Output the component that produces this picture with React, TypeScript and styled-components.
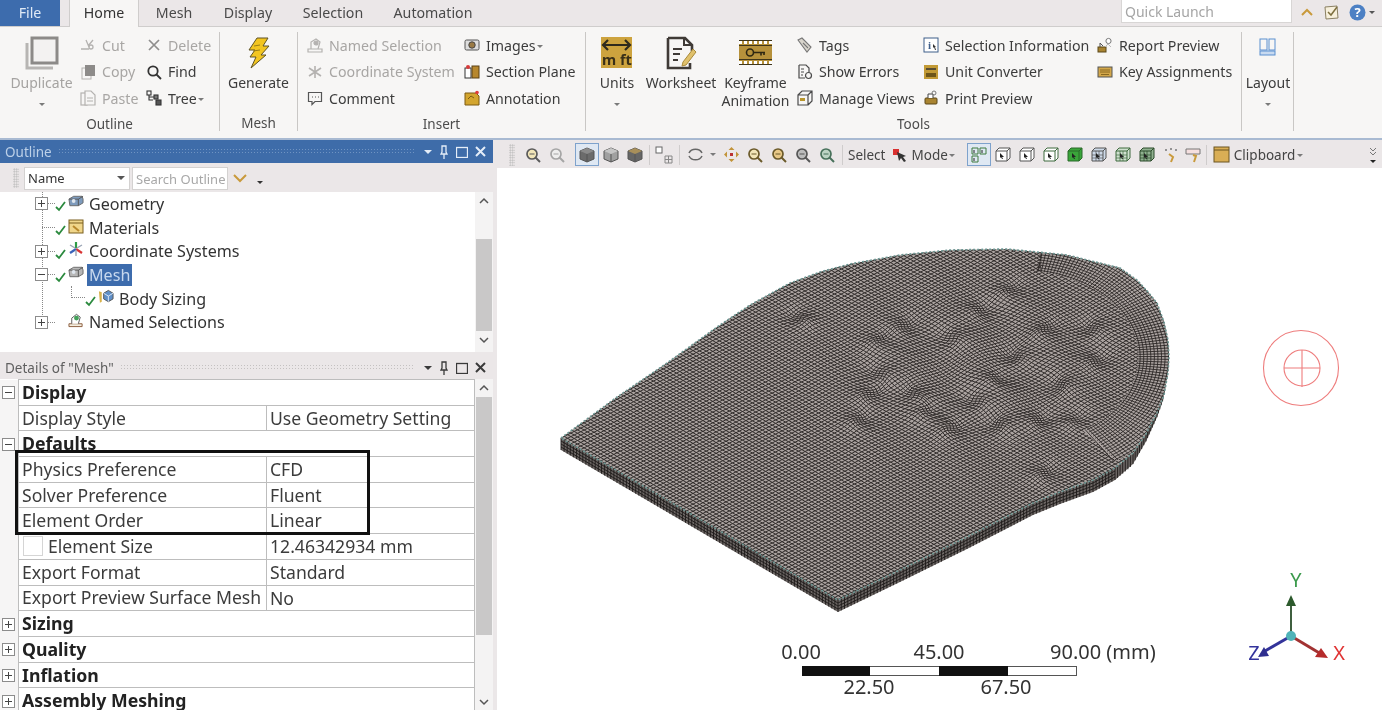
import React from "react";
import styled, { createGlobalStyle } from "styled-components";

const Global = createGlobalStyle`
  html, body { margin: 0; padding: 0; background: #fff; overflow: hidden; }
  body { font-family: "Noto Sans", "Liberation Sans", sans-serif; color: #3a3a3a; }
`;

/* ---------- icons ---------- */
const G = "#b4b2b0";
const icons: Record<string, React.ReactNode> = {
  cut: <g fill="none" stroke={G} strokeWidth="1.3"><path d="M1 12h8M6 3l3 7M13 3L8 9" /><circle cx="11" cy="10" r="2" /></g>,
  copy: <g><rect x="2" y="4" width="9" height="11" fill="none" stroke={G} /><rect x="5" y="1" width="10" height="11" fill="#8d8b89" /></g>,
  paste: <g fill="none" stroke={G} strokeWidth="1.2"><rect x="1" y="3" width="6" height="12" /><path d="M5 1h6l4 4v10H5z" fill="#f7f6f5" /><path d="M7 8h6M7 11h6" /></g>,
  del: <path d="M3 3l10 10M13 3L3 13" stroke="#8f8e8d" strokeWidth="1.7" fill="none" />,
  find: <g fill="none" stroke="#333" strokeWidth="1.8"><circle cx="7" cy="7" r="4.7" /><path d="M10.5 10.5L15 15" /></g>,
  tree: <g fill="none" stroke="#333" strokeWidth="1.1"><rect x="1" y="1" width="4" height="4" /><path d="M3 5v5h4M3 7h5" /><rect x="8" y="5" width="4" height="4" fill="#777" /><rect x="10" y="10" width="5" height="5" fill="#555" /></g>,
  named: <g fill="none" stroke={G} strokeWidth="1.2"><path d="M1 12h14v3H1z" /><path d="M4 12V5l5-3 4 3-2 7" /><circle cx="9" cy="6" r="2" fill={G} /></g>,
  coord: <g stroke={G} strokeWidth="1.6"><path d="M8 2v12M2 4l12 8M14 4L2 12" /></g>,
  comment: <path d="M1.5 2.5h13v9H8l-3 3v-3H1.5z M5 7h1M8 7h1M11 7h1" fill="none" stroke="#555" strokeWidth="1.2" />,
  images: <g><rect x="1" y="3" width="14" height="10" rx="1.5" fill="#ddd" stroke="#555" /><circle cx="8" cy="8" r="3.2" fill="#9a7a44" stroke="#444" /></g>,
  section: <g><rect x="1" y="4" width="6" height="10" fill="#fff" stroke="#333" /><rect x="8" y="2" width="7" height="12" fill="#b7872d" stroke="#5a4015" /><circle cx="4" cy="3" r="2" fill="#d83a3a" /></g>,
  annot: <g><path d="M1 3h11l3 3v9H1z" fill="#d3a52e" stroke="#7c5b12" /><path d="M4 9l3-3 3 2" stroke="#7c5b12" fill="none" /><circle cx="13" cy="2.5" r="1.8" fill="#e03b3b" /></g>,
  tags: <g fill="#d9d5cc" stroke="#777" strokeWidth="1.1"><path d="M1 3l4-2 9 9-4 5z" /><path d="M6 6l5 5" /></g>,
  errors: <g fill="none" stroke="#4a4a4a" strokeWidth="1.2"><path d="M2 1h7l3 3v4M2 1v13h6" /><path d="M4 5h3M4 8h3M4 11h2" /><circle cx="11.5" cy="11.5" r="3" /></g>,
  views: <g fill="none" stroke="#4a4a4a" strokeWidth="1.2"><path d="M1 5h10v10H1zM1 5l4-4h10v10l-4 4M11 5l4-4" /><rect x="3" y="8" width="5" height="3" fill="#b9962c" stroke="none" /></g>,
  selinfo: <g><rect x="1" y="1" width="14" height="14" fill="#fff" stroke="#3f5f8a" /><text x="5" y="12" fontSize="11" fontWeight="700" fill="#3f5f8a" fontFamily="Liberation Serif, serif">i</text><path d="M10 7l3 3-1 0 1 3-1 0-1-3-1 1z" fill="#333" /></g>,
  conv: <g><rect x="1" y="1" width="14" height="14" fill="#c29a35" /><path d="M3 5h10" stroke="#333" strokeWidth="1.5" /><rect x="3" y="9" width="10" height="4" fill="#6d5519" /></g>,
  print: <g><rect x="2" y="8" width="12" height="6" rx="1" fill="#a98431" stroke="#5b4718" /><path d="M5 8V4h5v4" fill="#fff" stroke="#444" /><circle cx="11" cy="3" r="2" fill="none" stroke="#777" /></g>,
  report: <g><rect x="1" y="10" width="8" height="5" fill="#a98431" stroke="#5b4718" /><path d="M3 10V6l3 3" stroke="#555" fill="none" /><circle cx="11.5" cy="4" r="2.6" fill="#fff" stroke="#777" /><path d="M8 10l3-3 3 3" stroke="#bbb" fill="none" /></g>,
  keys: <g><rect x="1" y="3" width="14" height="10" fill="#d3a74a" stroke="#555" /><path d="M3 6h10M3 8h10M4 10.500h8" stroke="#8a6920" /></g>,
};

const Ico = ({ k, s = 16 }: { k: string; s?: number }) => (
  <svg width={s} height={s} viewBox="0 0 16 16">{icons[k]}</svg>
);

const DuplicateIcon = () => (
  <svg width="36" height="36" viewBox="0 0 36 36">
    <path d="M3 8v25h26" fill="none" stroke="#b7b5b3" strokeWidth="3" />
    <rect x="8" y="3" width="25" height="25" fill="#f3f2f1" stroke="#8c8a88" strokeWidth="3" />
  </svg>
);
const BoltIcon = () => (
  <svg width="22" height="32" viewBox="0 0 22 32">
    <path d="M9 1h11l-5 8h6L13 18h5L3 31l5-11H2l5-7H1z" fill="#f2c521" stroke="#5e5326" strokeWidth="1" />
    <path d="M6 9l6-1M5 14l7-1" stroke="#9a7e15" />
  </svg>
);
const UnitsIcon = () => (
  <svg width="32" height="32" viewBox="0 0 32 32">
    <rect width="31" height="31" fill="#cda33e" />
    <path d="M2 8h27M7 3L2 8l5 5M24 3l5 5-5 5" fill="none" stroke="#2f2a1c" strokeWidth="2.2" />
    <text x="1" y="28" fontSize="14.500" fontWeight="700" fill="#3a3018" fontFamily="Noto Sans, sans-serif">m ft</text>
  </svg>
);
const WorksheetIcon = () => (
  <svg width="32" height="34" viewBox="0 0 32 34">
    <path d="M3 2h17l7 7v6M3 2v30h22v-5" fill="none" stroke="#3f3a36" strokeWidth="2.6" />
    <path d="M19 2v7h8M8 13h9M8 18h7M8 24h5" fill="none" stroke="#3f3a36" strokeWidth="2" />
    <path d="M28 13l3 3-10 13-4 1 1-4z" fill="#e0c16c" stroke="#a98a39" />
  </svg>
);
const KeyframeIcon = () => (
  <svg width="34" height="26" viewBox="0 0 34 26">
    <rect width="33" height="25" fill="#b6913b" />
    <path d="M0 2.500h33M0 22.500h33" stroke="#fff" strokeWidth="3" strokeDasharray="3 2" />
    <rect y="0" width="33" height="1" fill="#3f351a" /><rect y="5" width="33" height="1" fill="#3f351a" />
    <rect y="19" width="33" height="1" fill="#3f351a" /><rect y="24" width="33" height="1" fill="#3f351a" />
    <circle cx="11" cy="12.500" r="3.500" fill="none" stroke="#2e2712" strokeWidth="1.600" />
    <path d="M15 12.500h11M22 12.500v3M25 12.500v2.500" stroke="#2e2712" strokeWidth="1.600" fill="none" />
  </svg>
);
const LayoutIcon = () => (
  <svg width="18" height="18" viewBox="0 0 18 18">
    <rect x="1" y="1" width="7" height="11" fill="none" stroke="#5b8fd0" />
    <rect x="10" y="1" width="6" height="11" fill="none" stroke="#5b8fd0" />
    <rect x="1" y="13" width="15" height="4" fill="#c8daf0" stroke="#5b8fd0" />
  </svg>
);
const Caret = styled.span<{ $c?: string; $s?: number; $ml?: number; $mt?: number }>`
  display: inline-block; width: 0; height: 0; vertical-align: middle;
  margin-left: ${(p) => p.$ml || 0}px; margin-top: ${(p) => p.$mt || 0}px;
  border-left: ${(p) => p.$s || 3}px solid transparent; border-right: ${(p) => p.$s || 3}px solid transparent;
  border-top: ${(p) => p.$s || 3}px solid ${(p) => p.$c || "#7a7a7a"};
`;

/* ---------- top ---------- */
const Page = styled.div`
  width: 1382px; height: 710px; overflow: hidden; display: flex; flex-direction: column;
  background: #ebe7e8; filter: blur(0.35px);
`;
const TabBar = styled.div`
  height: 26px; flex: none; display: flex; align-items: flex-start; background: #ebe7e8;
  border-bottom: 1px solid #cfcdcc; font-size: 14.200px; color: #3f3f3f;
`;
const FileTab = styled.div`
  width: 60px; height: 26px; background: #3d6cad; color: #dfe9f5; text-align: center; line-height: 25px; margin-right: 9px;
`;
const HomeTab = styled.div`
  width: 68px; height: 27px; background: #f7f6f5; border: 1px solid #cfcdcc; border-width: 0 1px; text-align: center; line-height: 25px; color: #333; margin-right: 6px;
`;
const Tab = styled.div<{ $w: number }>`
  width: ${(p) => p.$w}px; text-align: center; line-height: 25px; color: #4a4a4a;
`;
const Spacer = styled.div`flex: 1;`;
const QuickLaunch = styled.div`
  width: 171px; height: 23px; background: #fff; border: 1px solid #d8d6d5; border-top: 0; box-sizing: border-box;
  color: #a5a5a5; padding-left: 3px; line-height: 23px; font-size: 14px; margin-right: 4px;
`;
const TopIcons = styled.div`
  width: 86px; height: 24px; display: flex; align-items: center; gap: 9px; padding-left: 4px; box-sizing: border-box;
`;

const Ribbon = styled.div`
  height: 113px; flex: none; box-sizing: border-box; padding: 5px 0 7px; display: flex; background: #f7f6f5;
  border-bottom: 2px solid #a9bad2;
`;
const Group = styled.div<{ $w: number }>`
  width: ${(p) => p.$w}px; flex: none; box-sizing: border-box; display: flex; flex-direction: column;
  border-right: 1px solid #c9c7c5;
`;
const GroupBody = styled.div<{ $pad?: number }>`
  height: 80px; display: flex; padding-left: ${(p) => p.$pad || 0}px;
`;
const GroupLabel = styled.div`
  margin-top: 4px; line-height: 16px; text-align: center; font-size: 13.5px; color: #4c4c4c;
`;
const Big = styled.div<{ $w: number; $off?: boolean }>`
  width: ${(p) => p.$w}px; flex: none; display: flex; flex-direction: column; align-items: center;
  font-size: 14px; line-height: 18px; text-align: center; color: ${(p) => (p.$off ? "#a5a3a1" : "#3c3c3c")};
`;
const BigIcon = styled.div<{ $top?: boolean }>`
  height: 42px; display: flex; justify-content: center;
  align-items: ${(p) => (p.$top ? "flex-start" : "center")};
  padding-top: ${(p) => (p.$top ? "6px" : "0")}; box-sizing: border-box;
`;
const BigCaret = styled.div`
  height: 20px; line-height: 22px;
`;
const Col = styled.div<{ $w: number }>`
  width: ${(p) => p.$w}px; flex: none; display: flex; flex-direction: column;
`;
const Small = styled.div<{ $off?: boolean }>`
  height: 26.5px; display: flex; align-items: center; gap: 6px; font-size: 14.200px; white-space: nowrap;
  color: ${(p) => (p.$off ? "#a8a6a4" : "#3c3c3c")};
`;

/* ---------- main ---------- */
const Main = styled.div`flex: 1; display: flex; min-height: 0;`;
const Left = styled.div`width: 497px; flex: none; display: flex; flex-direction: column; background: #ebe7e8;`;
const PanelHeader = styled.div<{ $active?: boolean }>`
  width: 493px; height: 23px; flex: none; box-sizing: border-box; display: flex; align-items: center; padding: 0 7px 0 5px;
  font-size: 13.5px; color: ${(p) => (p.$active ? "#bcd0e8" : "#5f5f5f")};
  background: ${(p) => (p.$active ? "#3e6ca9" : "#ebe7e8")};
`;
const Dots = styled.div<{ $active?: boolean }>`
  flex: 1; height: 7px; margin: 0 10px 0 6px;
  background-image: radial-gradient(${(p) => (p.$active ? "#6f93c2" : "#c4c1c1")} 0.8px, transparent 0.9px);
  background-size: 3px 3px;
`;
const HeaderIcons = styled.div`width: 62px; flex: none; display: flex; justify-content: space-between; align-items: center;`;
const OutlineBar = styled.div`
  height: 29px; flex: none; display: flex; align-items: center; font-size: 13px; padding-top: 1px; box-sizing: border-box;
`;
const Grip = styled.div<{ $ml: number; $h?: number }>`
  width: 6px; height: ${(p) => p.$h || 20}px; flex: none; margin-left: ${(p) => p.$ml}px;
  background-image: radial-gradient(#bbb 0.8px, transparent 0.9px); background-size: 2.500px 2.500px;
`;
const NameSelect = styled.div`
  width: 106px; height: 23px; box-sizing: border-box; margin-left: 5px; background: #fff; border: 1px solid #d4d2d1;
  display: flex; align-items: center; justify-content: space-between; padding: 0 4px 0 3px; color: #333;
`;
const SearchBox = styled.div`
  width: 96px; height: 23px; box-sizing: border-box; margin-left: 2px; background: #fff; border: 1px solid #d4d2d1;
  color: #a8a8a8; padding-left: 3px; line-height: 22px; white-space: nowrap; overflow: hidden;
`;
const BarChevron = styled.svg`width: 16px; height: 10px; margin-left: 4px; flex: none;`;
const TreeWrap = styled.div`
  width: 493px; height: 160px; flex: none; display: flex; background: #fff;
`;
const TreeList = styled.div`
  flex: 1; font-size: 16.100px; color: #333; white-space: nowrap;
  background-image: repeating-linear-gradient(to bottom, #888 0 1px, transparent 1px 2px);
  background-size: 1px 130px; background-position: 42px 0; background-repeat: no-repeat;
`;
const TreeRow = styled.div`
  height: 23.700px; display: flex; align-items: center;
`;
const Expander = styled.div<{ $ml?: number }>`
  width: 13px; height: 13px; box-sizing: border-box; margin-left: ${(p) => p.$ml ?? 0}px; flex: none;
  border: 1px solid #8c8c8c; background: #fff; position: relative;
  &::before { content: ""; position: absolute; left: 2px; right: 2px; top: 5px; height: 1px; background: #444; }
`;
const PlusExpander = styled(Expander)`
  &::after { content: ""; position: absolute; top: 2px; bottom: 2px; left: 5px; width: 1px; background: #444; }
`;
const Connector = styled.div<{ $w: number; $ml?: number }>`
  width: ${(p) => p.$w}px; height: 0; flex: none; margin-left: ${(p) => p.$ml || 0}px; border-top: 1px dotted #888;
`;
const Elbow = styled.div`
  width: 14px; height: 12px; flex: none; margin: -13px 0 0 71px; box-sizing: border-box;
  border-left: 1px dotted #888; border-bottom: 1px dotted #888;
`;
const TreeCheck = styled.svg`width: 12px; height: 11px; flex: none; margin-top: 6px;`;
const NodeIcon = styled.div<{ $ml?: number }>`
  width: 16px; height: 16px; flex: none; display: flex; margin: -4px 0 0 ${(p) => p.$ml ?? 1}px;
`;
const NodeLabel = styled.span<{ $sel?: boolean }>`
  margin-left: ${(p) => (p.$sel ? "3px" : "5px")}; line-height: 22px;
  padding: 0 ${(p) => (p.$sel ? "2px" : "0")};
  background: ${(p) => (p.$sel ? "#3d6cad" : "transparent")};
  color: ${(p) => (p.$sel ? "#c7d8ee" : "#333")};
`;
const Scrollbar = styled.div`
  width: 18px; flex: none; display: flex; flex-direction: column; align-items: center; background: #f4f3f3;
`;
const ScrollArrow = styled.svg<{ $mt: number }>`
  width: 12px; height: 8px; flex: none; margin-top: ${(p) => p.$mt}px;
`;
const Thumb = styled.div<{ $mt: number; $h: number }>`
  width: 16px; flex: none; margin-top: ${(p) => p.$mt}px; height: ${(p) => p.$h}px; background: #c9c8c8;
`;
const Splitter = styled.div`height: 4px; flex: none;`;
const DetailsWrap = styled.div`
  width: 493px; flex: 1; min-height: 0; display: flex; position: relative; overflow: hidden; background: #fff;
`;
const Table = styled.div`flex: 1; font-size: 17.600px; color: #3c3c3c; white-space: nowrap;`;
const Row = styled.div`
  height: 25.700px; box-sizing: border-box; display: flex; align-items: stretch;
`;
const Gutter = styled.div`
  width: 18px; flex: none; display: flex; align-items: center; padding-left: 2px; box-sizing: border-box; background: #f6f5f5;
`;
const RowBody = styled.div`
  flex: 1; display: flex; border-bottom: 1px solid #bdbdbd; border-left: 1px solid #bdbdbd; border-right: 1px solid #bdbdbd;
  line-height: 25px;
`;
const TopRule = styled.div`height: 1px; margin-left: 18px; background: #bdbdbd;`;
const Section = styled.div`padding-left: 3px; font-weight: 700; font-size: 17.700px; color: #222;`;
const NameCell = styled.div`
  width: 248px; flex: none; box-sizing: border-box; padding-left: 3px; border-right: 1px solid #bdbdbd; display: flex; align-items: center;
`;
const ValueCell = styled.div`padding-left: 3px;`;
const CheckBox = styled.div`
  width: 20px; height: 20px; box-sizing: border-box; margin: 0 5px 0 1px; border: 1px solid #d5d5d5; background: #fff;
`;
const Highlight = styled.div`
  position: absolute; left: 15px; top: 71px; width: 355px; height: 85px; box-sizing: border-box; border: 3px solid #111;
`;

/* ---------- viewport ---------- */
const Viewport = styled.div`flex: 1; display: flex; flex-direction: column; min-width: 0;`;
const ViewBar = styled.div`
  height: 28px; flex: none; display: flex; align-items: center; background: #ebe7e8; font-size: 13.500px; color: #444; padding: 1px 0 0 12px; box-sizing: border-box; white-space: nowrap;
`;
const ToolBtn = styled.div<{ $on?: boolean; $w?: number; $ml?: number }>`
  width: ${(p) => p.$w || 24}px; height: 23px; flex: none; box-sizing: border-box; display: flex; align-items: center; justify-content: center;
  margin-left: ${(p) => p.$ml || 0}px;
  border: 1px solid ${(p) => (p.$on ? "#7ea2cc" : "transparent")};
  background: ${(p) => (p.$on ? "#dfe8f3" : "transparent")};
`;
const Sep = styled.div<{ $l?: number; $r?: number }>`
  width: 1px; height: 20px; flex: none; background: #cfcccc; margin: 0 ${(p) => p.$r ?? 3}px 0 ${(p) => p.$l ?? 3}px;
`;
const BarGap = styled.div`width: 6px; flex: none;`;
const BarText = styled.span<{ $ml?: number }>`margin-left: ${(p) => p.$ml || 0}px;`;
const ModeIcon = styled.svg`width: 16px; height: 16px; margin-left: 7px; flex: none;`;
const Canvas = styled.div`flex: 1; position: relative; background: #fff; overflow: hidden;`;
const CanvasArt = styled.svg`position: absolute; left: 0; top: 0; width: 885px; height: 542px;`;
const Overflow = styled.div`
  margin-left: auto; margin-right: 5px; width: 9px; display: flex; flex-direction: column; align-items: center; gap: 4px;
`;

/* ---------- toolbar icons ---------- */
const Lens = ({ c = "#5a5a5a", fill = "#f2e6b8" }: { c?: string; fill?: string }) => (
  <svg width="16" height="16" viewBox="0 0 16 16">
    <circle cx="7" cy="7" r="5" fill={fill} stroke={c} strokeWidth="1.700" />
    <path d="M10.500 10.500L15 15" stroke={c} strokeWidth="2" />
    <path d="M4.500 7h5" stroke={c} />
  </svg>
);
const Cube = ({ top, side }: { top: string; side: string }) => (
  <svg width="16" height="16" viewBox="0 0 16 16">
    <path d="M8 1l7 3v8l-7 3-7-3V4z" fill={side} stroke="#555" />
    <path d="M8 1l7 3-7 3-7-3z" fill={top} />
    <path d="M8 7v8" stroke="#555" />
  </svg>
);
const Sel = ({ f = "#fff", c = "#555", grid }: { f?: string; c?: string; grid?: boolean }) => (
  <svg width="16" height="16" viewBox="0 0 16 16">
    <path d="M1 4l3-3h11v10l-3 3H1z" fill={f} stroke={c} />
    <path d="M1 4h11v10M12 4l3-3" fill="none" stroke={c} />
    {grid && <path d="M5 4v10M8 4v10M1 8h11M1 11h11" stroke={c} strokeWidth=".7" />}
    <path d="M5 6l4 4-2 0 1 2-1 0-1-2-1 1z" fill="#222" />
  </svg>
);

/* ---------- mesh drawing ---------- */
type P = [number, number];
const top: P[] = [
  [561, 438], [617, 397], [667, 363], [717, 327], [750, 305], [790, 283], [820, 272], [850, 264], [900, 255], [950, 250],
  [1007, 249], [1067, 255], [1120, 268], [1137, 280], [1148, 292], [1157, 303], [1164, 322], [1168, 340], [1169, 357], [1168, 373],
  [1164, 395], [1157, 413], [1146, 434], [1133, 453], [1115, 468], [1093, 480], [1060, 492], [1033, 503], [967, 537], [900, 570], [838, 600],
];
const toD = (pts: P[], close = true) =>
  "M" + pts.map((p) => p[0].toFixed(1) + " " + p[1].toFixed(1)).join("L") + (close ? "Z" : "");
const knots: [number, number, number][] = [
  [981, 309, 1], [1094, 328, -1], [1045, 330, 1], [1095, 360, 1], [878, 373, -1], [870, 393, 1], [915, 395, -1], [925, 412, 1],
  [950, 338, -1], [995, 380, 1], [1000, 425, -1], [1045, 473, 1], [1060, 385, -1], [950, 428, 1], [1020, 355, -1], [880, 340, 1], [1040, 420, 1],
  [800, 318, -1], [1010, 290, 1], [905, 325, 1], [975, 400, -1], [1075, 420, 1], [860, 420, 1],
];
const warp = (x: number, y: number): P => {
  let nx = x, ny = y;
  const ex = x - 985, ey = y - 365;
  const env = Math.exp(-(ex * ex) / 19000 - (ey * ey) / 7000);
  nx += 3.2 * Math.sin(y / 11 + x / 29) * env;
  ny += 2.4 * Math.cos(x / 13 - y / 23) * env;
  for (const [cx, cy, s] of knots) {
    const dx = x - cx, dy = (y - cy) * 1.5;
    const e = Math.exp(-(dx * dx + dy * dy) / 190);
    nx += (-dy * s * 0.5 - dx * 0.45) * e;
    ny += (dx * s * 0.3 - dy * 0.3) * e;
  }
  return [nx, ny];
};
const buildGrid = () => {
  const a: P = [3.3, 1.92], b: P = [3.3, -1.65], o: P = [561, 438];
  let d = "";
  const pt = (u: number, v: number) => warp(o[0] + u * a[0] + v * b[0], o[1] + u * a[1] + v * b[1]);
  for (let u = -20; u <= 95; u++) {
    const l: P[] = [];
    for (let v = -5; v <= 135; v += 1) l.push(pt(u, v));
    d += toD(l, false);
  }
  for (let v = -5; v <= 135; v++) {
    const l: P[] = [];
    for (let u = -20; u <= 95; u += 1) l.push(pt(u, v));
    d += toD(l, false);
  }
  return d;
};
const rim = { cx: 1020, cy: 357, rx: 148, ry: 108, r0: 0.8, r1: 1.16, a0: -82, a1: 58 };
const ell = (r: number, deg: number): P => {
  const t = (deg * Math.PI) / 180;
  return [rim.cx + r * rim.rx * Math.cos(t), rim.cy + r * rim.ry * Math.sin(t)];
};
const buildRim = () => {
  let d = "";
  for (let r = rim.r0 + 0.012; r <= rim.r1; r += 0.024) {
    const l: P[] = [];
    for (let t = rim.a0; t <= rim.a1; t += 3) l.push(ell(r, t));
    d += toD(l, false);
  }
  for (let t = rim.a0 + 0.75; t <= rim.a1; t += 1.5) d += toD([ell(rim.r0, t), ell(rim.r1, t)], false);
  return d;
};
const rimFill = () => {
  const l: P[] = [];
  for (let t = rim.a0; t <= rim.a1; t += 3) l.push(ell(rim.r1, t));
  for (let t = rim.a1; t >= rim.a0; t -= 3) l.push(ell(rim.r0, t));
  return toD(l);
};
const lowerEdge: P[] = [[561, 438], [838, 600], ...top.slice(20).reverse().slice(1)];
const depthAt = (x: number) => (x > 1130 ? Math.max(1, 12 - (x - 1130) / 3.5) : 12);
const buildSide = () => {
  let d = "";
  for (let i = 0; i < lowerEdge.length - 1; i++) {
    const [x0, y0] = lowerEdge[i], [x1, y1] = lowerEdge[i + 1];
    const n = Math.max(1, Math.round(Math.hypot(x1 - x0, y1 - y0) / 3.6));
    for (let k = 0; k < n; k++) {
      const x = x0 + ((x1 - x0) * k) / n, y = y0 + ((y1 - y0) * k) / n;
      d += `M${x.toFixed(1)} ${y.toFixed(1)}v${depthAt(x).toFixed(1)}`;
    }
  }
  for (const off of [3, 6, 9]) d += toD(lowerEdge.filter((p) => p[0] < 1130).map((p) => [p[0], p[1] + off] as P), false);
  return d;
};
const sideOutline = (): P[] => {
  const out = lowerEdge.map((p) => [p[0], p[1] + depthAt(p[0])] as P);
  return [...lowerEdge, ...out.reverse()];
};
const GRID = buildGrid(), RIM = buildRim(), RIMF = rimFill(), SIDE = buildSide(), SIDEF = toD(sideOutline()), TOP = toD(top);

const ART_FONT = "Noto Sans, Liberation Sans, sans-serif";

const Art = () => (
  <CanvasArt viewBox="497 168 885 542">
    <defs><clipPath id="surf"><path d={TOP} /></clipPath></defs>
    <path d={SIDEF} fill="#6b6563" />
    <path d={SIDE} fill="none" stroke="#1d1a19" strokeWidth=".9" />
    <path d={TOP} fill="#aba3a0" />
    <g clipPath="url(#surf)">
      <path d={GRID} fill="none" stroke="#2b2726" strokeWidth=".95" />
      <path d={RIMF} fill="#aba3a0" />
      <path d={RIM} fill="none" stroke="#2b2726" strokeWidth=".9" />
    </g>
    <path d={TOP} fill="none" stroke="#6d9793" strokeWidth="1.600" strokeDasharray="2 2" />

    <circle cx="1301" cy="368" r="37.500" fill="none" stroke="#ee7d7d" strokeWidth="1.100" />
    <circle cx="1302" cy="368" r="18" fill="none" stroke="#ee7d7d" strokeWidth="1.100" />
    <path d="M1284 368h36M1302 350v37" stroke="#ee7d7d" strokeWidth="1.100" />

    <g fontFamily={ART_FONT} fontSize="20" fill="#333">
      <text x="801" y="659" textAnchor="middle">0.00</text>
      <text x="939" y="659" textAnchor="middle">45.00</text>
      <text x="1050" y="659">90.00 (mm)</text>
      <text x="869" y="694" textAnchor="middle">22.50</text>
      <text x="1006" y="694" textAnchor="middle">67.50</text>
    </g>
    <rect x="802.500" y="666.500" width="274" height="9" fill="#fff" stroke="#555" />
    <rect x="802" y="666" width="68" height="10" fill="#111" />
    <rect x="939" y="666" width="69" height="10" fill="#111" />

    <path d="M1291 636V604" stroke="#3f5f3f" strokeWidth="2" />
    <path d="M1291 595l5 11h-10z" fill="#2d5a2d" />
    <path d="M1291 636l30 18" stroke="#a23232" strokeWidth="3" />
    <path d="M1328 658l-13-1 6-9z" fill="#b52b2b" />
    <path d="M1291 636l-26 15" stroke="#33339a" strokeWidth="3" />
    <path d="M1258 657l6-10 5 9z" fill="#2f2f8f" />
    <circle cx="1291" cy="636" r="5" fill="#4fb3b8" />
    <g fontFamily={ART_FONT} fontSize="20">
      <text x="1296" y="587" textAnchor="middle" fill="#3b9a4c">Y</text>
      <text x="1339" y="660" textAnchor="middle" fill="#e03434">X</text>
      <text x="1254" y="660" textAnchor="middle" fill="#34349c">Z</text>
    </g>
  </CanvasArt>
);

/* ---------- small parts ---------- */
const Small2 = ({ k, t, off }: { k: string; t: React.ReactNode; off?: boolean }) => (
  <Small $off={off}><Ico k={k} /><span>{t}</span></Small>
);
const HeaderCtl = ({ light }: { light?: boolean }) => {
  const c = light ? "#e4edf8" : "#3a3a3a";
  return (
    <HeaderIcons>
      <Caret $c={c} $s={4} />
      <svg width="10" height="14" viewBox="0 0 10 14"><path d="M3 1h4v6l1 2H2l1-2zM5 9v5" fill="none" stroke={c} strokeWidth="1.300" /></svg>
      <svg width="12" height="12" viewBox="0 0 12 12"><rect x=".5" y="1.500" width="11" height="10" fill="none" stroke={c} strokeWidth="1.300" /></svg>
      <svg width="11" height="11" viewBox="0 0 11 11"><path d="M1 1l9 9M10 1l-9 9" stroke={c} strokeWidth="2" /></svg>
    </HeaderIcons>
  );
};
const Check = () => (
  <TreeCheck viewBox="0 0 12 11"><path d="M1 6l3 3 6-8" fill="none" stroke="#2b8a3e" strokeWidth="1.800" /></TreeCheck>
);
const BlockIcon = ({ c = "#7e9bbd" }: { c?: string }) => (
  <svg width="16" height="14" viewBox="0 0 17 14">
    <path d="M1 5l5-3h9l1 3v4l-5 3H2z" fill={c} stroke="#6a6a6a" />
    <path d="M1 5h10v7M11 5l5-3" fill="none" stroke="#555" />
    <circle cx="6" cy="7" r="2" fill="#dfe6ee" />
  </svg>
);
const FolderIcon = () => (
  <svg width="16" height="16" viewBox="0 0 16 16">
    <rect x="1" y="2" width="14" height="13" fill="#f0d68a" stroke="#7a5f1f" />
    <path d="M1 5h14" stroke="#7a5f1f" />
    <path d="M5 8l6 5" stroke="#b8882b" strokeWidth="2" />
  </svg>
);
const StarIcon = () => (
  <svg width="16" height="16" viewBox="0 0 16 16">
    <path d="M8 1v6" stroke="#2e9b46" strokeWidth="2.200" />
    <path d="M8 8l6 4" stroke="#d83434" strokeWidth="2.200" />
    <path d="M8 8l-6 4" stroke="#3a62b8" strokeWidth="2.200" />
    <path d="M2 4l5 3M14 4L9 7M8 9v6" stroke="#9aa5b5" strokeWidth="1.400" />
  </svg>
);
const SizingIcon = () => (
  <svg width="16" height="16" viewBox="0 0 17 16">
    <path d="M1 2l3 1v10l-2 1z" fill="#d8b24a" />
    <path d="M6 4l5-3 5 3v6l-5 3-5-3z" fill="#5f8fc8" stroke="#555" />
    <path d="M6 4l5 3 5-3M11 7v6" fill="none" stroke="#dde8f5" />
  </svg>
);
const NamedIcon = () => (
  <svg width="16" height="16" viewBox="0 0 17 16">
    <path d="M1 12h14v3H1z" fill="#f4eee0" stroke="#8a5a3a" />
    <path d="M4 12V6l5-4 4 3-2 7" fill="#fff" stroke="#555" />
    <circle cx="9" cy="6" r="2.600" fill="#43a05a" />
  </svg>
);
const Arrow = ({ up, mt }: { up?: boolean; mt: number }) => (
  <ScrollArrow $mt={mt} viewBox="0 0 12 8">
    <path d={up ? "M2 6l4-4 4 4" : "M2 2l4 4 4-4"} fill="none" stroke="#555" strokeWidth="1.500" />
  </ScrollArrow>
);
const Tgl = ({ open }: { open?: boolean }) => (open ? <Expander /> : <PlusExpander />);

const details: { s?: string; open?: boolean; n?: string; v?: string; chk?: boolean }[] = [
  { s: "Display", open: true },
  { n: "Display Style", v: "Use Geometry Setting" },
  { s: "Defaults", open: true },
  { n: "Physics Preference", v: "CFD" },
  { n: "Solver Preference", v: "Fluent" },
  { n: "Element Order", v: "Linear" },
  { n: "Element Size", v: "12.46342934 mm", chk: true },
  { n: "Export Format", v: "Standard" },
  { n: "Export Preview Surface Mesh", v: "No" },
  { s: "Sizing" },
  { s: "Quality" },
  { s: "Inflation" },
  { s: "Assembly Meshing" },
];

export default function App() {
  return (
    <>
      <Global />
      <Page>
        <TabBar>
          <FileTab>File</FileTab>
          <HomeTab>Home</HomeTab>
          <Tab $w={58}>Mesh</Tab>
          <Tab $w={90}>Display</Tab>
          <Tab $w={80}>Selection</Tab>
          <Tab $w={120}>Automation</Tab>
          <Spacer />
          <QuickLaunch>Quick Launch</QuickLaunch>
          <TopIcons>
            <svg width="14" height="10" viewBox="0 0 14 10"><path d="M2 8l5-5 5 5" fill="none" stroke="#c99a3c" strokeWidth="2" /></svg>
            <svg width="17" height="17" viewBox="0 0 17 17"><path d="M2 3l12-1 1 12-12 1z" fill="#f7f0dc" stroke="#8a8062" /><path d="M5 8l3 3 6-8" fill="none" stroke="#7d6f3f" strokeWidth="1.500" /></svg>
            <svg width="17" height="17" viewBox="0 0 17 17"><circle cx="8.500" cy="8.500" r="8" fill="#4c80c4" /><text x="8.500" y="13" textAnchor="middle" fontSize="13" fontWeight="700" fill="#fff" fontFamily="Noto Sans, sans-serif">?</text></svg>
            <Caret $c="#555" $ml={-6} />
          </TopIcons>
        </TabBar>

        <Ribbon>
          <Group $w={220}>
            <GroupBody $pad={3}>
              <Big $w={77} $off><BigIcon><DuplicateIcon /></BigIcon>Duplicate<BigCaret><Caret /></BigCaret></Big>
              <Col $w={66}>
                <Small2 k="cut" t="Cut" off /><Small2 k="copy" t="Copy" off /><Small2 k="paste" t="Paste" off />
              </Col>
              <Col $w={66}>
                <Small2 k="del" t="Delete" off /><Small2 k="find" t="Find" />
                <Small2 k="tree" t={<>Tree<Caret $ml={1} /></>} />
              </Col>
            </GroupBody>
            <GroupLabel>Outline</GroupLabel>
          </Group>
          <Group $w={78}>
            <GroupBody>
              <Big $w={77}><BigIcon><BoltIcon /></BigIcon>Generate</Big>
            </GroupBody>
            <GroupLabel>Mesh</GroupLabel>
          </Group>
          <Group $w={288}>
            <GroupBody $pad={9}>
              <Col $w={157}>
                <Small2 k="named" t="Named Selection" off /><Small2 k="coord" t="Coordinate System" off /><Small2 k="comment" t="Comment" />
              </Col>
              <Col $w={115}>
                <Small2 k="images" t={<>Images<Caret $ml={1} /></>} /><Small2 k="section" t="Section Plane" /><Small2 k="annot" t="Annotation" />
              </Col>
            </GroupBody>
            <GroupLabel>Insert</GroupLabel>
          </Group>
          <Group $w={656}>
            <GroupBody>
              <Big $w={62}><BigIcon><UnitsIcon /></BigIcon>Units<BigCaret><Caret /></BigCaret></Big>
              <Big $w={66}><BigIcon><WorksheetIcon /></BigIcon>Worksheet</Big>
              <Big $w={83}><BigIcon><KeyframeIcon /></BigIcon>Keyframe<br />Animation</Big>
              <Col $w={126}>
                <Small2 k="tags" t="Tags" /><Small2 k="errors" t="Show Errors" /><Small2 k="views" t="Manage Views" />
              </Col>
              <Col $w={174}>
                <Small2 k="selinfo" t="Selection Information" /><Small2 k="conv" t="Unit Converter" /><Small2 k="print" t="Print Preview" />
              </Col>
              <Col $w={138}>
                <Small2 k="report" t="Report Preview" /><Small2 k="keys" t="Key Assignments" />
              </Col>
            </GroupBody>
            <GroupLabel>Tools</GroupLabel>
          </Group>
          <Group $w={52}>
            <GroupBody>
              <Big $w={52}><BigIcon $top><LayoutIcon /></BigIcon>Layout<BigCaret><Caret /></BigCaret></Big>
            </GroupBody>
          </Group>
        </Ribbon>

        <Main>
          <Left>
            <PanelHeader $active>Outline<Dots $active /><HeaderCtl light /></PanelHeader>
            <OutlineBar>
              <Grip $ml={13} />
              <NameSelect>Name<Caret $c="#555" $s={4} /></NameSelect>
              <SearchBox>Search Outline</SearchBox>
              <BarChevron viewBox="0 0 16 10"><path d="M2 2l6 6 6-6" fill="none" stroke="#c99a3c" strokeWidth="2" /></BarChevron>
              <Caret $c="#333" $ml={9} $mt={8} />
            </OutlineBar>
            <TreeWrap>
              <TreeList>
                <TreeRow><PlusExpander $ml={35} /><Connector $w={7} /><Check /><NodeIcon><BlockIcon /></NodeIcon><NodeLabel>Geometry</NodeLabel></TreeRow>
                <TreeRow><Connector $w={13} $ml={42} /><Check /><NodeIcon><FolderIcon /></NodeIcon><NodeLabel>Materials</NodeLabel></TreeRow>
                <TreeRow><PlusExpander $ml={35} /><Connector $w={7} /><Check /><NodeIcon><StarIcon /></NodeIcon><NodeLabel>Coordinate Systems</NodeLabel></TreeRow>
                <TreeRow><Expander $ml={35} /><Connector $w={7} /><Check /><NodeIcon><BlockIcon c="#b7b7b7" /></NodeIcon><NodeLabel $sel>Mesh</NodeLabel></TreeRow>
                <TreeRow><Elbow /><Check /><NodeIcon><SizingIcon /></NodeIcon><NodeLabel>Body Sizing</NodeLabel></TreeRow>
                <TreeRow><PlusExpander $ml={35} /><Connector $w={7} /><NodeIcon $ml={13}><NamedIcon /></NodeIcon><NodeLabel>Named Selections</NodeLabel></TreeRow>
              </TreeList>
              <Scrollbar>
                <Arrow up mt={5} /><Thumb $mt={34} $h={92} /><Arrow mt={5} />
              </Scrollbar>
            </TreeWrap>
            <Splitter />
            <PanelHeader>Details of "Mesh"<Dots /><HeaderCtl /></PanelHeader>
            <DetailsWrap>
              <Table>
                <TopRule />
                {details.map((d) => (
                  <Row key={d.s || d.n}>
                    <Gutter>{d.s && <Tgl open={d.open} />}</Gutter>
                    <RowBody>
                      {d.s ? <Section>{d.s}</Section> : (
                        <>
                          <NameCell>{d.chk && <CheckBox />}{d.n}</NameCell>
                          <ValueCell>{d.v}</ValueCell>
                        </>
                      )}
                    </RowBody>
                  </Row>
                ))}
              </Table>
              <Scrollbar>
                <Arrow up mt={5} /><Thumb $mt={5} $h={238} /><Arrow mt={63} />
              </Scrollbar>
              <Highlight />
            </DetailsWrap>
          </Left>

          <Viewport>
            <ViewBar>
              <Grip $ml={0} $h={22} />
              <ToolBtn $ml={6}><Lens /></ToolBtn>
              <ToolBtn><Lens c="#a5a5a5" fill="#eeeeee" /></ToolBtn>
              <BarGap />
              <ToolBtn $on><Cube top="#8a8a8a" side="#6b6b6b" /></ToolBtn>
              <ToolBtn><Cube top="#c5c5c5" side="#a0a0a0" /></ToolBtn>
              <ToolBtn><Cube top="#a88f5a" side="#666" /></ToolBtn>
              <Sep $l={2} $r={2} />
              <ToolBtn><svg width="18" height="18" viewBox="0 0 18 18"><rect x="1" y="1" width="6" height="6" fill="#fff" stroke="#666" /><path d="M10 10h7v7h-7zM13.500 10v7M10 13.500h7" fill="none" stroke="#888" /></svg></ToolBtn>
              <Sep $l={3} $r={3} />
              <ToolBtn><svg width="17" height="17" viewBox="0 0 17 17"><path d="M2 7a7 6 0 0 1 13 0M15 10a7 6 0 0 1-13 0" fill="none" stroke="#666" strokeWidth="1.500" /></svg></ToolBtn>
              <ToolBtn $w={12}><Caret /></ToolBtn>
              <ToolBtn $w={24}><svg width="15" height="15" viewBox="0 0 15 15"><path d="M7.500 0l3 3h-6zM7.500 15l3-3h-6zM0 7.500l3-3v6zM15 7.500l-3-3v6z" fill="#c2943a" /><rect x="6" y="6" width="3" height="3" fill="#b33" /></svg></ToolBtn>
              <ToolBtn><Lens c="#6b5a2a" /></ToolBtn>
              <ToolBtn><Lens c="#6b5a2a" fill="#e9c987" /></ToolBtn>
              <ToolBtn><Lens c="#555" fill="#bcbcbc" /></ToolBtn>
              <ToolBtn><Lens c="#47705a" fill="#bcd3c4" /></ToolBtn>
              <Sep />
              <BarText $ml={2}>Select</BarText>
              <ModeIcon viewBox="0 0 16 16"><rect x="1" y="2" width="6" height="6" fill="#d93030" /><path d="M5 5l9 4-3 1 3 4-2 1-3-4-2 3z" fill="#333" /></ModeIcon>
              <BarText $ml={3}>Mode<Caret $ml={1} /></BarText>
              <ToolBtn $on $ml={12}><svg width="16" height="16" viewBox="0 0 16 16"><path d="M1 1h6v6H1zM9 1h6v6H9zM1 9h6v6H1z" fill="none" stroke="#3f7a3f" /><path d="M3 3v3M11 3v3M3 11v3" stroke="#222" /></svg></ToolBtn>
              <ToolBtn><Sel /></ToolBtn>
              <ToolBtn><Sel /></ToolBtn>
              <ToolBtn><Sel c="#3f6a3f" /></ToolBtn>
              <ToolBtn><Sel f="#3aa53a" c="#2a6a2a" /></ToolBtn>
              <ToolBtn><Sel f="#cdd9e8" grid /></ToolBtn>
              <ToolBtn><Sel f="#cfe0cf" c="#3f6a3f" grid /></ToolBtn>
              <ToolBtn><Sel f="#8fb08f" c="#2a4a2a" grid /></ToolBtn>
              <ToolBtn><svg width="16" height="16" viewBox="0 0 16 16"><path d="M6 7l4 3-2 5" stroke="#c99a3c" strokeWidth="2" fill="none" /><path d="M2 3h2M7 2h2M12 3h2" stroke="#777" strokeWidth="1.500" /></svg></ToolBtn>
              <ToolBtn $w={21}><svg width="16" height="16" viewBox="0 0 16 16"><path d="M1 2h14v5H1z" fill="#f5dfdf" stroke="#777" /><path d="M8 8l3 1-2 6" stroke="#c99a3c" strokeWidth="2" fill="none" /></svg></ToolBtn>
              <Sep $l={2} />
              <ToolBtn $w={24}><svg width="17" height="17" viewBox="0 0 17 17"><rect x="1" y="1" width="15" height="15" fill="#d9ae55" stroke="#6b5520" /><path d="M1 4h15" stroke="#6b5520" /></svg></ToolBtn>
              <BarText>Clipboard<Caret $ml={2} /></BarText>
              <Overflow>
                <svg width="8" height="9" viewBox="0 0 8 9"><path d="M1 1l3 3 3-3M1 5l3 3 3-3" fill="none" stroke="#777" /></svg>
                <Caret $c="#222" />
              </Overflow>
            </ViewBar>
            <Canvas><Art /></Canvas>
          </Viewport>
        </Main>
      </Page>
    </>
  );
}
